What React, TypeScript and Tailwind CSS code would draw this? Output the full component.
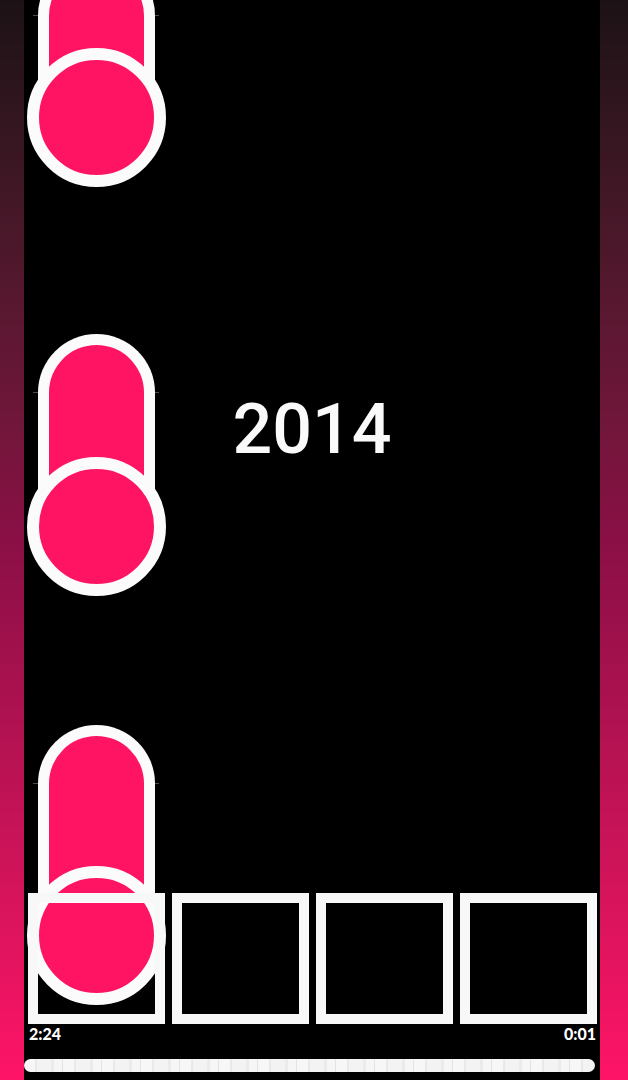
import React from "react";

type Shape = { pillTop: number; circleTop: number };

const shapes: Shape[] = [
  { pillTop: -43, circleTop: 48 },
  { pillTop: 334, circleTop: 457 },
  { pillTop: 725, circleTop: 866 },
];

function Lipstick({ pillTop, circleTop }: Shape) {
  const pillHeight = circleTop + 69 - pillTop;
  return (
    <>
      <div
        className="absolute left-[9px] w-[126px] h-px bg-white/30"
        style={{ top: pillTop + 58 }}
      />
      <div
        className="absolute left-[14px] w-[117px] rounded-t-[58.5px] border-[11px] border-b-0 border-[#fbfbfb] bg-[#ff1464]"
        style={{ top: pillTop, height: pillHeight }}
      />
      <div
        className="absolute left-[3px] w-[139px] h-[139px] rounded-full border-[12px] border-[#fbfbfb] bg-[#ff1464]"
        style={{ top: circleTop }}
      />
    </>
  );
}

export default function App() {
  return (
    <div className="flex w-[628px] h-[1080px] overflow-hidden bg-black">
      <div className="w-[24px] h-full bg-gradient-to-b from-[#1c1216] via-[#8a0f45] to-[#ff1467]" />
      <div className="relative flex-1 h-full bg-black overflow-hidden flex flex-col">
        {shapes.map((s, i) => (
          <Lipstick key={i} {...s} />
        ))}
        <div
          className="absolute left-0 right-0 top-[394px] text-center text-[70px] leading-none text-[#fafafa]"
          style={{ fontFamily: "Roboto, 'Noto Sans', sans-serif", fontWeight: 500 }}
        >
          2014
        </div>

        <div className="relative z-10 mt-auto flex gap-[7px] pl-[4px] pr-[3px]">
          {[0, 1, 2, 3].map((i) => (
            <div
              key={i}
              className="w-[137px] h-[131px] border-[10px] border-[#f8f8f8] bg-transparent"
            />
          ))}
        </div>
        <div
          className="relative z-10 mt-[1px] flex justify-between pl-[5px] pr-[4px] h-[18px] text-[16px] leading-[18px] font-black text-white"
          style={{ fontFamily: "Lato, 'Open Sans', sans-serif" }}
        >
          <span>2:24</span>
          <span>0:01</span>
        </div>
        <div className="relative z-10 mt-[16px] mr-[5px] h-[13px] rounded-full bg-[repeating-linear-gradient(90deg,#f7f7f7_0px,#f7f7f7_11px,#e9e9e9_11px,#e9e9e9_13px,#f3f3f3_13px,#f3f3f3_27px,#ebebeb_27px,#ebebeb_30px,#f6f6f6_30px,#f6f6f6_38px,#e4e4e4_38px,#e4e4e4_39px)]" />
        <div className="h-[8px]" />
      </div>
      <div className="w-[28px] h-full bg-gradient-to-b from-[#1c1216] via-[#8a0f45] to-[#ff1467]" />
    </div>
  );
}
